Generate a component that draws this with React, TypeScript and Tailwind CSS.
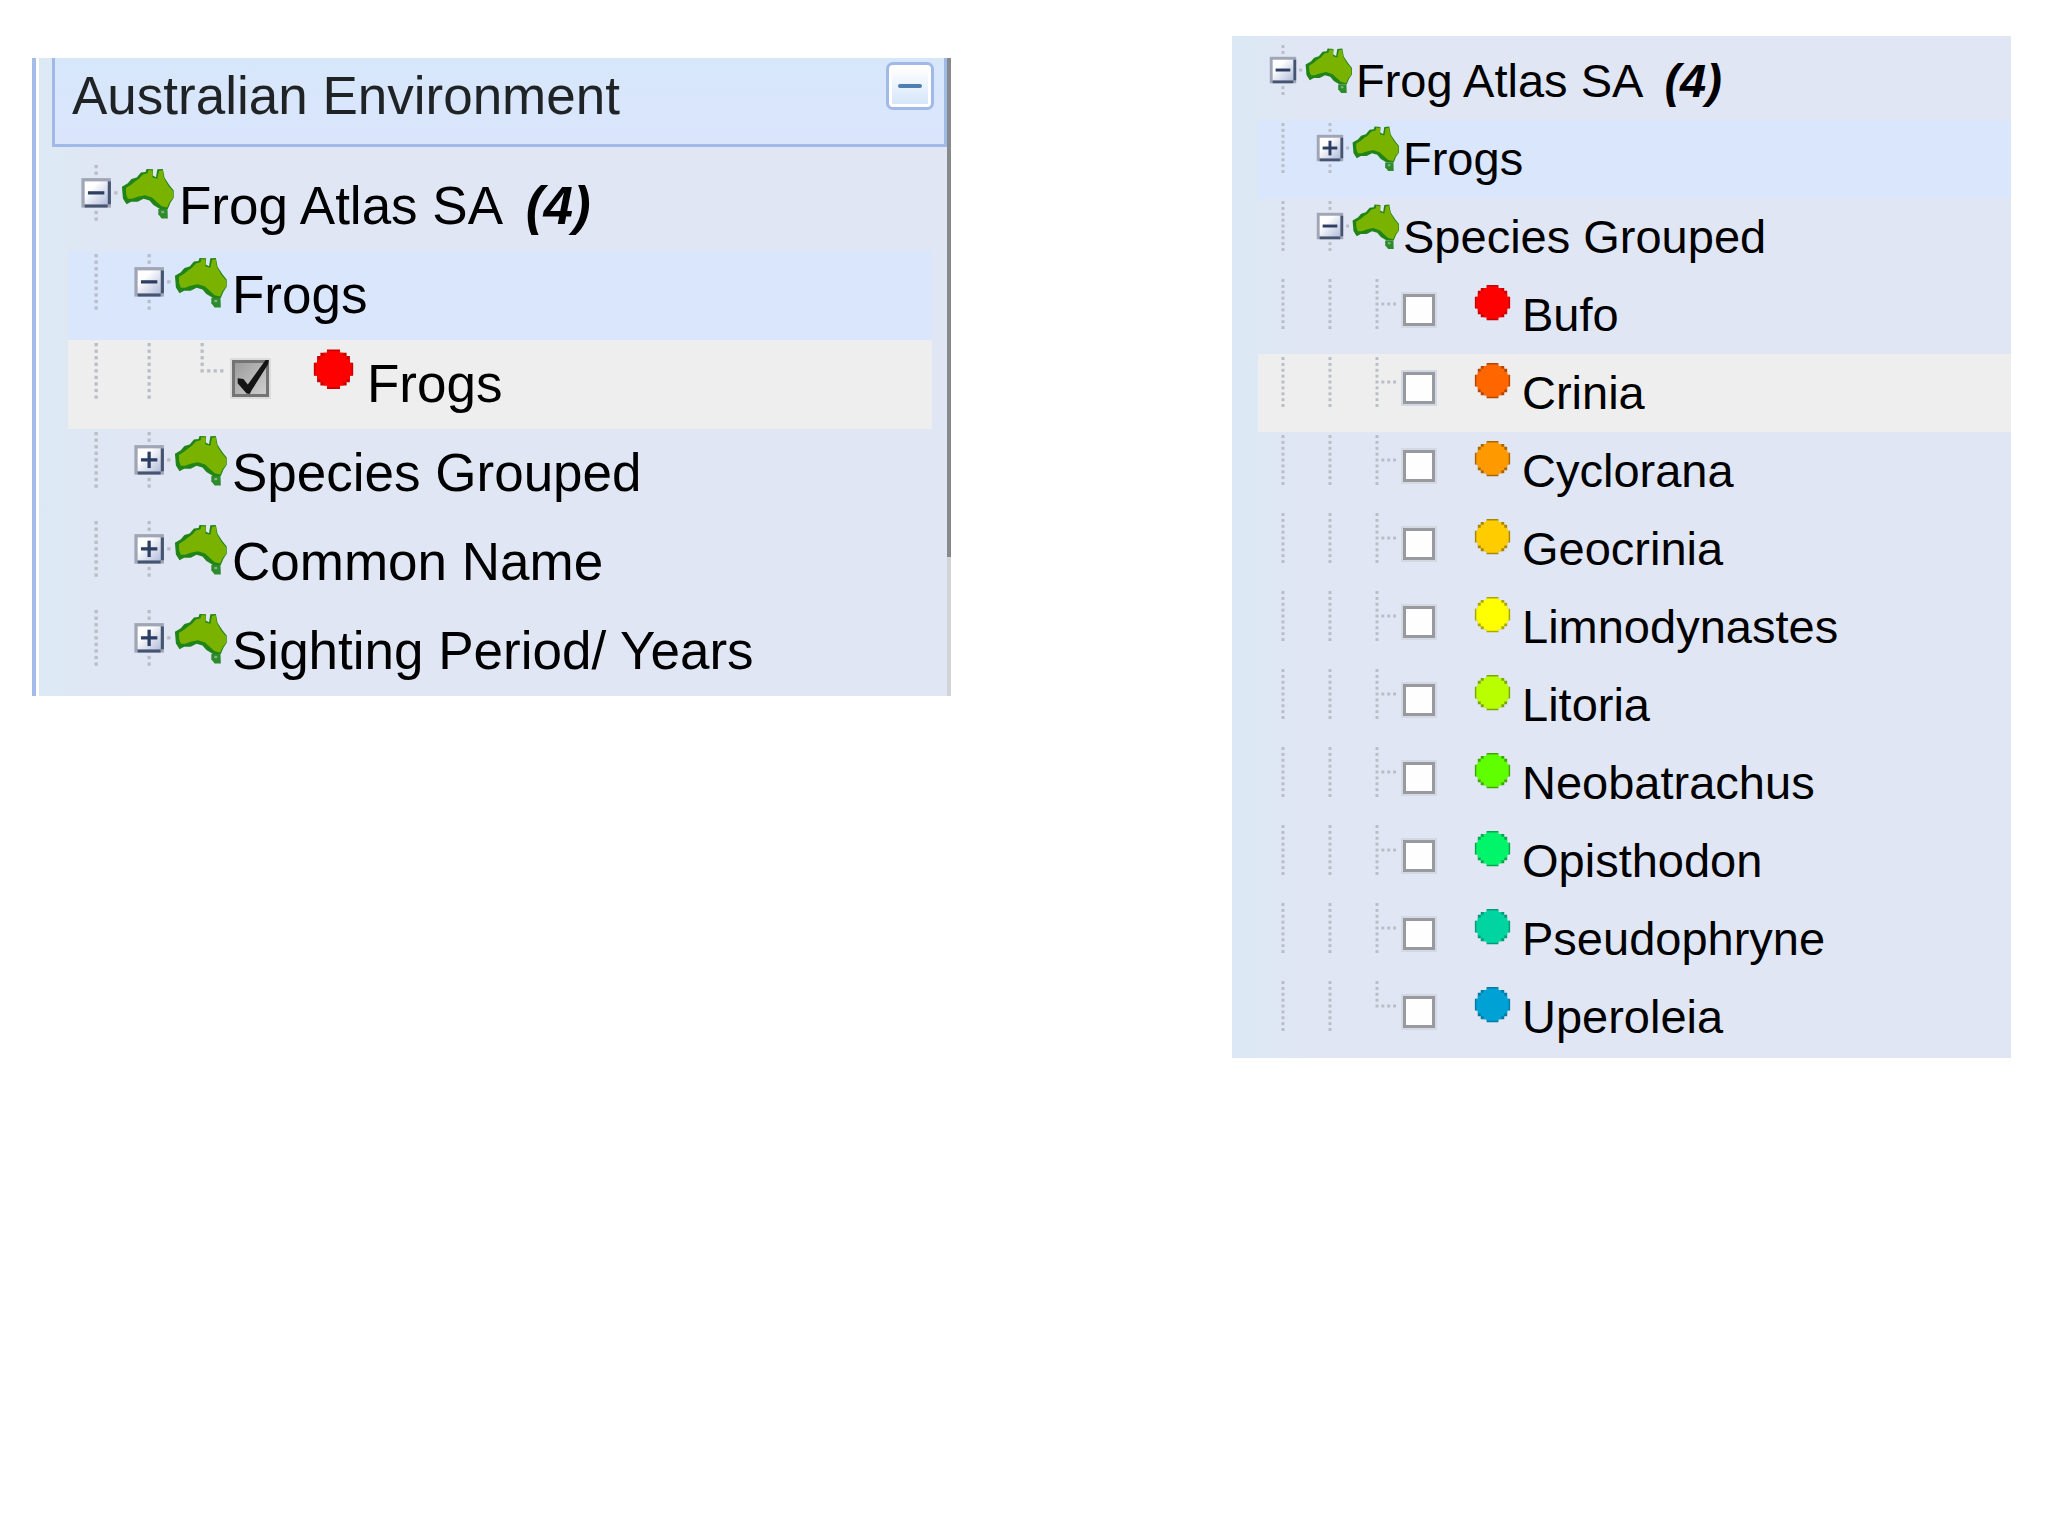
import { useState } from "react";
import clsx from "clsx";

type Size = "lg" | "md";

type Row = {
  label: string;
  depth: number;
  count?: number;
  open?: boolean;
  color?: string;
  edge?: string;
  checked?: boolean;
  last?: boolean;
  tone?: "blue" | "cream";
};

const environmentRows: Row[] = [
  { label: "Frog Atlas SA", depth: 0, open: true, count: 4 },
  { label: "Frogs", depth: 1, open: true, tone: "blue" },
  { label: "Frogs", depth: 2, color: "#ff0000", edge: "#c80000", checked: true, last: true, tone: "cream" },
  { label: "Species Grouped", depth: 1, open: false },
  { label: "Common Name", depth: 1, open: false },
  { label: "Sighting Period/ Years", depth: 1, open: false },
];

const speciesRows: Row[] = [
  { label: "Frog Atlas SA", depth: 0, open: true, count: 4 },
  { label: "Frogs", depth: 1, open: false, tone: "blue" },
  { label: "Species Grouped", depth: 1, open: true },
  { label: "Bufo", depth: 2, color: "#ff0000", edge: "#c80000" },
  { label: "Crinia", depth: 2, color: "#ff6600", edge: "#b34700", tone: "cream" },
  { label: "Cyclorana", depth: 2, color: "#ff9900", edge: "#a86500" },
  { label: "Geocrinia", depth: 2, color: "#ffcc00", edge: "#a88600" },
  { label: "Limnodynastes", depth: 2, color: "#ffff00", edge: "#a8a800" },
  { label: "Litoria", depth: 2, color: "#b9ff00", edge: "#7aa800" },
  { label: "Neobatrachus", depth: 2, color: "#5fff00", edge: "#3fa800" },
  { label: "Opisthodon", depth: 2, color: "#00f56a", edge: "#00a84a" },
  { label: "Pseudophryne", depth: 2, color: "#00d5a2", edge: "#009b78" },
  { label: "Uperoleia", depth: 2, color: "#00a2d5", edge: "#007ba3", last: true },
];

// every tree graphic is drawn on the same 16 x 18 grid
const cell: Record<Size, string> = {
  lg: "w-[53px] h-[59px] shrink-0",
  md: "w-[47px] h-[53px] shrink-0",
};

function Dots({ ys }: { ys: number[] }) {
  return (
    <>
      {ys.map((y) => (
        <rect key={y} x="8" y={y} width="1" height="1" fill="#b9bdc6" />
      ))}
    </>
  );
}

function Guide({ size }: { size: Size }) {
  return (
    <svg viewBox="0 0 16 18" className={cell[size]} aria-hidden="true">
      <Dots ys={[0, 2, 4, 6, 8, 10, 12, 14, 16]} />
    </svg>
  );
}

function Elbow({ size, last }: { size: Size; last?: boolean }) {
  return (
    <svg viewBox="0 0 16 18" className={cell[size]} aria-hidden="true">
      <Dots ys={last ? [0, 2, 4, 6, 8] : [0, 2, 4, 6, 8, 10, 12, 14, 16]} />
      {[10, 12, 14].map((x) => (
        <rect key={x} x={x} y="8" width="1" height="1" fill="#b9bdc6" />
      ))}
    </svg>
  );
}

function Toggle({ size, open, label }: { size: Size; open: boolean; label: string }) {
  return (
    <button type="button" aria-expanded={open} aria-label={`Toggle ${label}`} className={cell[size]}>
      <svg viewBox="0 0 16 18" className="h-full w-full">
        <defs>
          <linearGradient id="toggleFace" x1="0" y1="0" x2="1" y2="1">
            <stop offset="0.3" stopColor="#ffffff" />
            <stop offset="1" stopColor="#b3bedb" />
          </linearGradient>
        </defs>
        <Dots ys={[0, 2, 14, 16]} />
        <rect x="14" y="8" width="1" height="1" fill="#b9bdc6" />
        <rect x="4" y="4" width="9" height="9" fill="#a0a6b6" />
        <path d="M12 5h1v7h-1v1h-7v-1h7z" fill="#455470" />
        <rect x="5" y="5" width="7" height="7" fill="url(#toggleFace)" />
        <rect x="6" y="8" width="5" height="1" fill="#2c3f63" />
        {!open && <rect x="8" y="6" width="1" height="5" fill="#2c3f63" />}
      </svg>
    </button>
  );
}

function Australia({ size }: { size: Size }) {
  return (
    <svg viewBox="0 0 16 18" className={cell[size]} aria-hidden="true">
      <path
        d="M0.2 6.6L2 5.6 3.1 4.3 4.7 3.8 6 2.3 7.4 2.1 7.7 1.2 9.7 1.3 9.6 3.2 10.6 3.7 11 1.3 12.7 1.2 13.2 3.9 14.7 6.2 16 7.8 16 10 15 11.5 14.2 13.4 11.8 13.4 9.8 12.2 8.6 10.8 6.8 10.3 5 11.2 3 11.2 1.6 12 0.5 10.2z"
        fill="#218418"
      />
      <path
        d="M1.4 7L3 6 4.2 5 5.4 4.2 6.6 2.9 8 2.5 8.3 1.5 9.6 1.7 9.5 3.8 11 4.2 11.5 1.8 12.6 1.5 13 4 14.4 6.4 15.8 8 15.8 10 14.7 11.4 14 13 12.3 12.6 10.8 11.2 9.4 9.9 7.2 9.2 5 9.7 3.3 10.3 2 10.3 1.5 9z"
        fill="#7ab200"
      />
      <path d="M11.3 13.4L14.1 13.4 14.2 16.3 12.3 16.3 11.3 15z" fill="#2d8b2c" />
      <path d="M12.2 14h0.9v0.7h-0.9z" fill="#7db578" />
    </svg>
  );
}

function Marker({ size, color, edge }: { size: Size; color: string; edge?: string }) {
  return (
    <svg viewBox="0 0 16 18" className={cell[size]} aria-hidden="true">
      <path d="M6 2h4v1h2v1h1v2h1v4h-1v2h-1v1h-2v1h-4v-1h-2v-1h-1v-2h-1v-4h1v-2h1v-1h2z" fill={edge} />
      <path d="M6 2.5h4v0.5h1v1h1v1h1v1h0.5v4h-0.5v1h-1v1h-1v1h-1v0.5h-4v-0.5h-1v-1h-1v-1h-1v-1h-0.5v-4h0.5v-1h1v-1h1v-1h1z" fill={color} />
    </svg>
  );
}

function TreeRow({ row, size }: { row: Row; size: Size }) {
  const [checked, setChecked] = useState(!!row.checked);
  const lg = size === "lg";
  const isLeaf = row.color !== undefined;

  const text = (
    <>
      {row.label}
      {row.count !== undefined && <b className="ml-2 italic"> ({row.count})</b>}
    </>
  );
  const textClass = clsx("whitespace-nowrap", lg ? "pt-[14px] text-[53px] leading-[60px]" : "pt-[12px] text-[47px] leading-[54px]");

  return (
    <li
      className={clsx(
        "flex items-start",
        lg ? "h-[89px]" : "h-[78px]",
        row.tone === "blue" && "bg-[#d9e6fc]",
        row.tone === "cream" && "bg-[#efeeee]"
      )}
    >
      <div className="flex pt-[3px]">
        {Array.from({ length: row.depth }, (_, i) => (
          <Guide key={i} size={size} />
        ))}
        {isLeaf ? <Elbow size={size} last={row.last} /> : <Toggle size={size} open={!!row.open} label={row.label} />}
      </div>
      {isLeaf ? (
        <label className="flex">
          <span className={clsx("relative", lg ? "w-[80px] pl-[5px] pt-[20px]" : "w-[70px] pl-[4px] pt-[18px]")}>
            <input
              type="checkbox"
              checked={checked}
              onChange={(e) => setChecked(e.target.checked)}
              className={clsx(
                "block appearance-none border-[3px] outline-2",
                lg ? "size-[37px]" : "size-[32px]",
                checked
                  ? "border-[#747474] bg-linear-to-br from-[#9c9c9c] to-[#cfcfcf] outline-[#dcdcdc]"
                  : "border-[#979a9e] bg-[#fdfefd] outline-[#d3d8e2]"
              )}
            />
            {checked && (
              <svg
                viewBox="0 0 12 12"
                className={clsx("pointer-events-none absolute", lg ? "left-[5px] top-[18px] size-[38px]" : "left-[4px] top-[16px] size-[33px]")}
              >
                <path d="M1.8 6.4L3.6 6.6 5 8.4 10.6 0.6 11.6 0.6 11.4 2 6.2 10.2 5.6 11.4 4.6 11.2 1.8 8z" fill="#141414" />
              </svg>
            )}
          </span>
          <span className="pt-[3px]">
            <Marker size={size} color={row.color!} edge={row.edge} />
          </span>
          <span className={clsx(textClass, lg ? "pl-[7px]" : "pl-[6px]")}>{text}</span>
        </label>
      ) : (
        <>
          <span className="pt-[3px]">
            <Australia size={size} />
          </span>
          <span className={clsx(textClass, lg ? "pl-[5px]" : "pl-[4px]")}>{text}</span>
        </>
      )}
    </li>
  );
}

function Tree({ rows, size }: { rows: Row[]; size: Size }) {
  return (
    <ul className="text-black">
      {rows.map((row, i) => (
        <TreeRow key={i} row={row} size={size} />
      ))}
    </ul>
  );
}

export default function App() {
  return (
    <main className="grid min-h-screen grid-cols-[919fr_779fr] items-start gap-[281px] bg-white pl-8 pr-[37px] font-['Liberation_Sans',Arial,sans-serif]">
      <section className="mt-[58px] flex border-l-4 border-[#a3bcea]">
        <div className="ml-[3px] min-w-0 flex-1 bg-linear-to-r from-[#dce9f3] to-[#e0e6f4] to-10%">
          <header className="ml-[13px] flex h-[89px] items-start justify-between border-x-[3px] border-b-[3px] border-[#a1b9e6] bg-linear-to-b from-[#d7e7fa] to-[#dae5fc] pl-[17px] pr-[10px]">
            <h2 className="whitespace-nowrap pt-[8px] text-[53px] leading-[60px] text-[#1f2326]">Australian Environment</h2>
            <button
              type="button"
              aria-label="Collapse"
              className="mt-[4px] flex size-[48px] shrink-0 items-center justify-center rounded-[7px] border-[3px] border-[#a1b9e6] bg-white"
            >
              <span className="flex size-[36px] items-center justify-center bg-linear-to-b from-white to-[#d6e6fb]">
                <span className="h-[4px] w-[24px] rounded-xs bg-[#4f7fb0]" />
              </span>
            </button>
          </header>
          <div className="pl-[29px] pr-[15px] pt-[15px]">
            <Tree rows={environmentRows} size="lg" />
          </div>
        </div>
        <div className="flex w-1 flex-col bg-[#d2d3d6]">
          <div className="h-[499px] bg-[#87898c]" />
        </div>
      </section>

      <section className="mt-[36px] bg-linear-to-r from-[#dce8f5] to-[#e0e6f4] to-10% pb-[2px] pl-[26px] pt-[6px]">
        <Tree rows={speciesRows} size="md" />
      </section>
    </main>
  );
}
